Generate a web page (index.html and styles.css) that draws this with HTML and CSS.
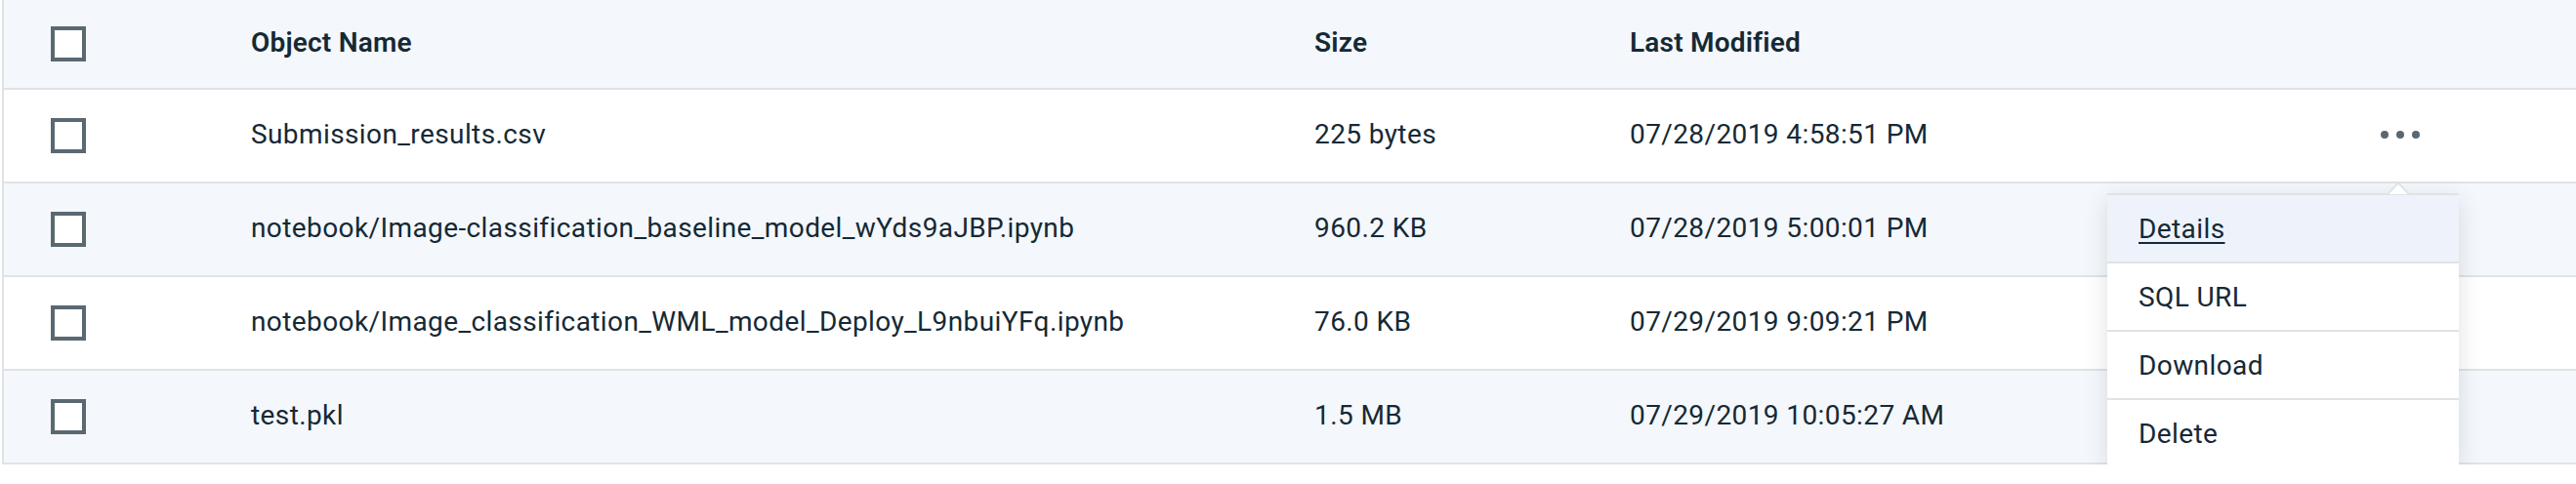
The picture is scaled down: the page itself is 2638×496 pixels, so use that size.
FILE: index.html
```html
<!DOCTYPE html>
<html lang="en">
<head>
<meta charset="utf-8">
<title>Objects</title>
<link rel="stylesheet" href="styles.css">
</head>
<body>
<div class="table">
  <div class="row head">
    <div class="cell check"><span class="checkbox"></span></div>
    <div class="cell">Object Name</div>
    <div class="cell">Size</div>
    <div class="cell">Last Modified</div>
    <div class="cell"></div>
  </div>
  <div class="row">
    <div class="cell check"><span class="checkbox"></span></div>
    <div class="cell">Submission_results.csv</div>
    <div class="cell">225 bytes</div>
    <div class="cell">07/28/2019 4:58:51 PM</div>
    <div class="cell actions">
      <span class="overflow"><i></i><i></i><i></i></span>
      <div class="menu">
        <svg class="caret" width="24" height="13" viewBox="0 0 24 13"><polygon points="1,13 12,1.5 23,13" fill="#ffffff"/><polyline points="1,13 12,1.5 23,13" fill="none" stroke="#dfe3e6" stroke-width="2"/></svg>
        <div class="item active"><span>Details</span></div>
        <div class="item">SQL URL</div>
        <div class="item">Download</div>
        <div class="item">Delete</div>
      </div>
    </div>
  </div>
  <div class="row alt">
    <div class="cell check"><span class="checkbox"></span></div>
    <div class="cell">notebook/Image-classification_baseline_model_wYds9aJBP.ipynb</div>
    <div class="cell">960.2 KB</div>
    <div class="cell">07/28/2019 5:00:01 PM</div>
    <div class="cell"></div>
  </div>
  <div class="row">
    <div class="cell check"><span class="checkbox"></span></div>
    <div class="cell">notebook/Image_classification_WML_model_Deploy_L9nbuiYFq.ipynb</div>
    <div class="cell">76.0 KB</div>
    <div class="cell">07/29/2019 9:09:21 PM</div>
    <div class="cell"></div>
  </div>
  <div class="row alt">
    <div class="cell check"><span class="checkbox"></span></div>
    <div class="cell">test.pkl</div>
    <div class="cell">1.5 MB</div>
    <div class="cell">07/29/2019 10:05:27 AM</div>
    <div class="cell"></div>
  </div>
</div>
</body>
</html>
```
FILE: styles.css
```css
html, body {
  margin: 0;
  padding: 0;
  background: #ffffff;
}
body {
  font-family: Roboto, "Noto Sans", sans-serif;
  color: #152935;
  font-size: 28px;
  letter-spacing: 0.4px;
}
.table {
  margin-left: 2px;
  border-left: 2px solid #dfe3e6;
}
.row {
  display: grid;
  grid-template-columns: 253px 1089px 323px 741px 96px 1fr;
  height: 94px;
  border-bottom: 2px solid #dfe3e6;
  background: #ffffff;
}
.row.alt {
  background: #f4f7fb;
}
.row.head {
  height: 90px;
  background: #f4f7fb;
  font-weight: 600;
  letter-spacing: 0.2px;
}
.cell {
  display: flex;
  align-items: center;
  white-space: nowrap;
  padding-bottom: 4px;
}
.cell.check {
  padding-left: 48px;
  padding-bottom: 0;
}
.checkbox {
  display: block;
  width: 28px;
  height: 28px;
  border: 4px solid #5a6872;
  background: #ffffff;
}
.actions {
  position: relative;
  justify-content: center;
  padding-bottom: 2px;
}
.overflow {
  display: flex;
  gap: 8px;
}
.overflow i {
  display: block;
  width: 8px;
  height: 8px;
  border-radius: 50%;
  background: #5a6872;
}
.menu {
  position: absolute;
  left: -252px;
  top: 106px;
  width: 360px;
  background: #ffffff;
  border-top: 2px solid #dfe3e6;
  box-shadow: 0 6px 24px rgba(0, 0, 0, 0.12);
  z-index: 2;
}
.caret {
  position: absolute;
  left: 286px;
  top: -14px;
}
.item {
  height: 68px;
  display: flex;
  align-items: center;
  padding-left: 32px;
  border-bottom: 2px solid #dfe3e6;
  font-weight: 400;
}
.item:last-child {
  border-bottom: none;
}
.item.active {
  background: #eef3fb;
}
.item.active span {
  text-decoration: underline;
  text-underline-offset: 4px;
  text-decoration-thickness: 2px;
}
```
